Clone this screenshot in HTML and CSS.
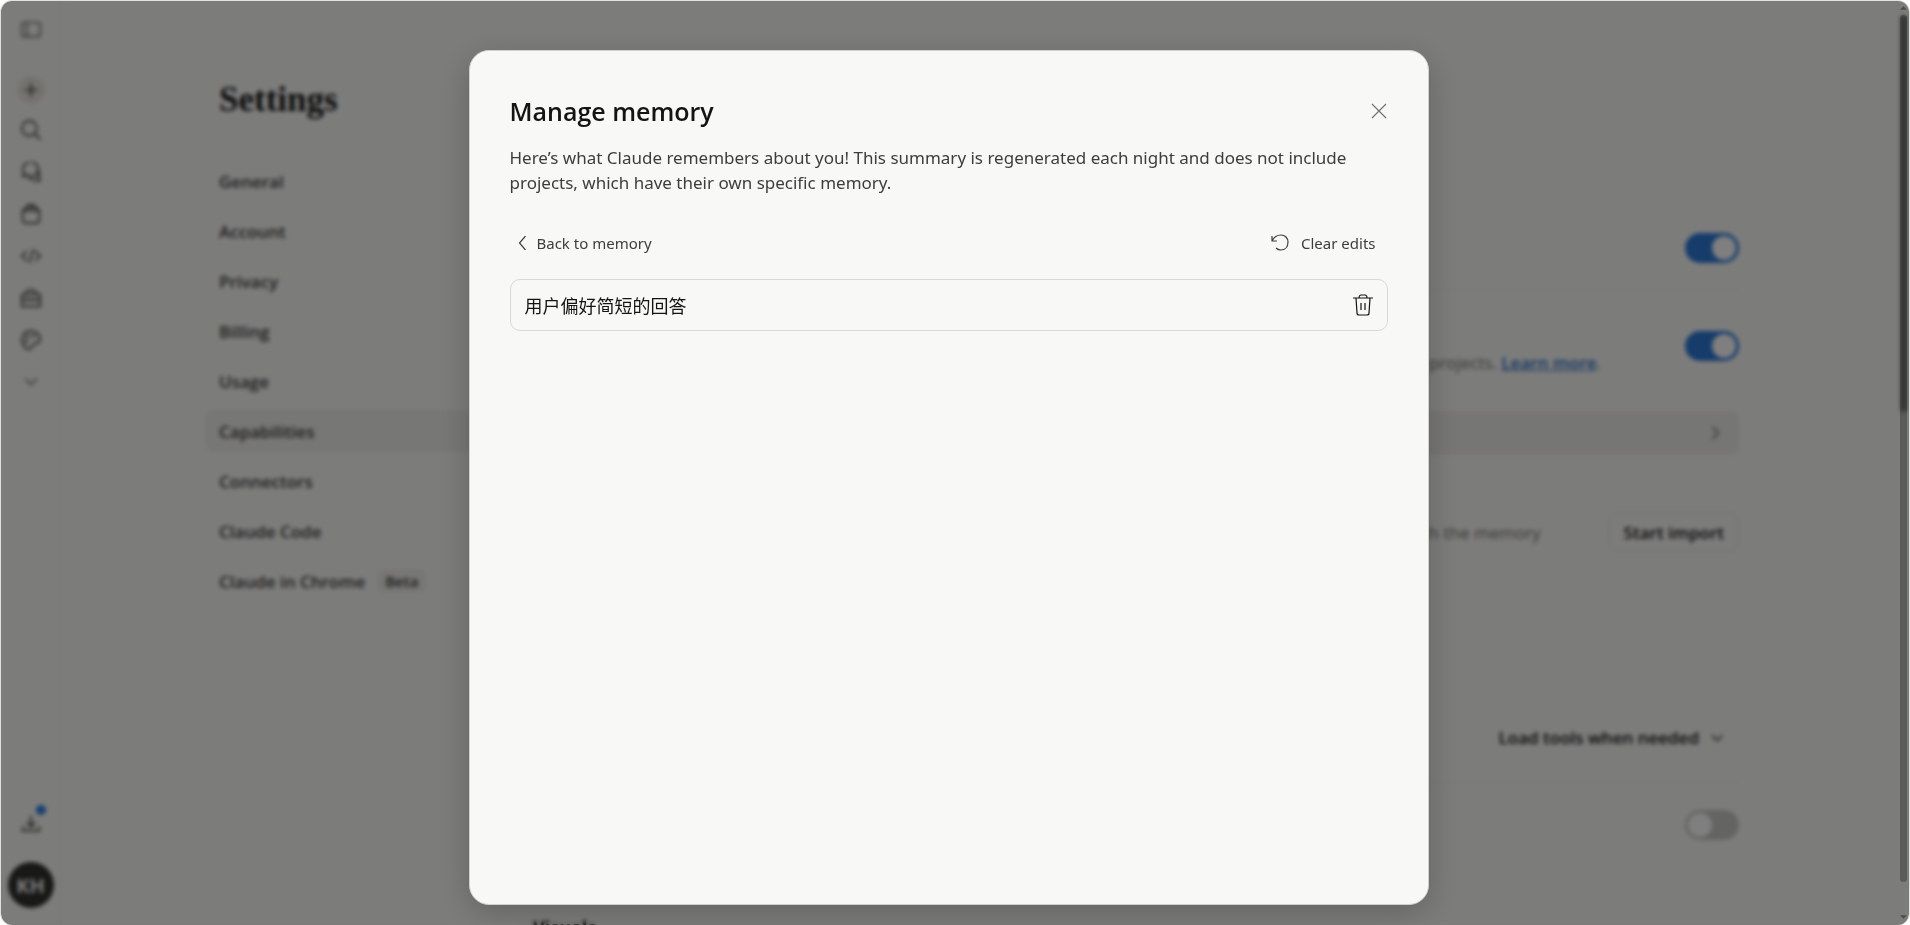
FILE: index.html
```html
<!DOCTYPE html>
<html lang="en">
<head>
    <meta charset="UTF-8">
    <meta name="viewport" content="width=device-width, initial-scale=1.0">
    <title>Settings</title>
    <link rel="stylesheet" href="styles.css">
</head>
<body>
    <div class="window">
        <div class="app">
            <aside class="sidebar">
                <button class="icon-btn toggle-btn" aria-label="Toggle sidebar">
                    <svg viewBox="0 0 24 24"><rect x="1" y="3" width="22" height="17" rx="2"/><path d="M7 3v17"/></svg>
                </button>
                <button class="icon-btn new-btn" aria-label="New chat">
                    <svg viewBox="0 0 24 24"><path d="M12 4v16M4 12h16"/></svg>
                </button>
                <button class="icon-btn" aria-label="Search">
                    <svg viewBox="0 0 24 24"><circle cx="10" cy="10" r="9"/><path d="M16 16l8 8"/></svg>
                </button>
                <button class="icon-btn" aria-label="Chats">
                    <svg viewBox="0 0 24 24"><path d="M2 17l2-3C0 8 4 0 11 0s11 5 9 12c-1 5-8 7-11 4-2 1-4 1-7 1z"/><path d="M9 18c2 4 7 5 14 4l-2-4c2-3 1-6-1-8"/></svg>
                </button>
                <button class="icon-btn" aria-label="Projects">
                    <svg viewBox="0 0 24 24"><path d="M2 8h20v10c0 3-1 5-4 5H6c-3 0-4-2-4-5zM3 7l3-3h12l3 3M7 1h10"/></svg>
                </button>
                <button class="icon-btn" aria-label="Code">
                    <svg viewBox="0 0 24 24"><path d="M7 6l-6 6 6 6M17 6l6 6-6 6M15 4l-5 16"/></svg>
                </button>
                <button class="icon-btn" aria-label="Customize">
                    <svg viewBox="0 0 24 24"><path d="M1 10c0-2 1-3 3-3h16c2 0 3 1 3 3v12H1zM1 14h22M6 7c0-7 12-7 12 0M8 12v4M16 12v4"/></svg>
                </button>
                <button class="icon-btn" aria-label="Design">
                    <svg viewBox="0 0 24 24"><path d="M12 1C5 1 1 7 1 12s4 11 9 11c3 0 3-3 4-5 2-4 9 0 9-7 0-5-5-10-11-10z"/><circle cx="8" cy="8" r="1"/><circle cx="15" cy="7" r="1"/><circle cx="6" cy="14" r="1"/></svg>
                </button>
                <button class="icon-btn faint" aria-label="More">
                    <svg viewBox="0 0 24 24"><path d="M5 8l7 7 7-7"/></svg>
                </button>
                <div class="sidebar-bottom">
                    <button class="icon-btn download" aria-label="Download apps">
                        <svg viewBox="0 0 24 24"><path d="M12 2v13M7 10l5 5 5-5M2 15v5h20v-5"/></svg>
                        <span class="dot"></span>
                    </button>
                    <button class="avatar">KH</button>
                </div>
            </aside>

            <div class="page">
                <div class="settings-side">
                    <h1>Settings</h1>
                    <nav class="settings-nav">
                        <a href="#">General</a>
                        <a href="#">Account</a>
                        <a href="#">Privacy</a>
                        <a href="#">Billing</a>
                        <a href="#">Usage</a>
                        <a href="#" class="active">Capabilities</a>
                        <a href="#">Connectors</a>
                        <a href="#">Claude Code</a>
                        <a href="#">Claude in Chrome <span class="beta">Beta</span></a>
                    </nav>
                </div>

                <main class="content">
                    <div class="row">
                        <input type="checkbox" class="switch" aria-label="Search past chats" checked>
                    </div>
                    <div class="row memory-row">
                        <p class="desc">projects. <a href="#">Learn more</a>.</p>
                        <input type="checkbox" class="switch" aria-label="Generate memory" checked>
                    </div>
                    <button class="memory-card" aria-label="View memory">
                        <svg viewBox="0 0 24 24"><path d="M9 5l7 7-7 7"/></svg>
                    </button>
                    <div class="row import-row">
                        <p class="desc">with the memory</p>
                        <button class="import-btn">Start import</button>
                    </div>
                    <div class="row tools-row">
                        <button class="tools-btn">Load tools when needed
                            <svg viewBox="0 0 24 24"><path d="M4 8l8 8 8-8"/></svg>
                        </button>
                    </div>
                    <div class="row last-row">
                        <input type="checkbox" class="switch" aria-label="Connector discovery">
                    </div>
                    <h2>Visuals</h2>
                </main>
            </div>
            <div class="scroll-thumb"></div>
        </div>

        <div class="overlay">
            <div class="modal" role="dialog" aria-labelledby="modalTitle">
                <div class="modal-header">
                    <h2 id="modalTitle">Manage memory</h2>
                    <button class="close-btn" aria-label="Close">
                        <svg viewBox="0 0 16 16"><path d="M1 1l14 14M15 1L1 15"/></svg>
                    </button>
                </div>
                <p class="modal-text">Here’s what Claude remembers about you! This summary is regenerated each night and does not include projects, which have their own specific memory.</p>
                <div class="modal-actions">
                    <button class="text-btn back-btn">
                        <svg class="back-icon" viewBox="0 0 8 14"><path d="M7 0L1 7l6 7"/></svg>
                        Back to memory
                    </button>
                    <button class="text-btn clear-btn">
                        <svg class="clear-icon" viewBox="0 0 18 18"><path d="M1 2v5h5M1 7c2-4 5-6 9-6 4 0 7 3 7 7 0 5-3 8-7 8-2 0-4-1-5-2"/></svg>
                        Clear edits
                    </button>
                </div>
                <ul class="edits">
                    <li>
                        <span lang="zh-CN">用户偏好简短的回答</span>
                        <button class="delete-btn" aria-label="Delete edit">
                            <svg viewBox="0 0 20 22"><path d="M0 4h20M6 4c0-2 1-3 2-3h4c1 0 2 1 2 3M3 4l1 15c0 1 1 2 2 2h8c1 0 2-1 2-2l1-15M8 9v7M12 9v7"/></svg>
                        </button>
                    </li>
                </ul>
            </div>
            <div class="scroll-track">
                <svg viewBox="0 0 8 4"><path d="M0 4l4-4 4 4z"/></svg>
                <span></span>
                <svg viewBox="0 0 8 4"><path d="M0 0l4 4 4-4z"/></svg>
            </div>
        </div>
    </div>
</body>
</html>
```
FILE: styles.css
```css
* {
    box-sizing: border-box;
}

body {
    margin: 0;
    background: #fff;
    color: #141413;
    font-family: "Open Sans", "Noto Sans CJK SC", sans-serif;
    font-size: 17px;
}

h1, h2, p, ul {
    margin: 0;
    padding: 0;
}

button {
    border: 0;
    padding: 0;
    background: none;
    color: inherit;
    font: inherit;
    cursor: pointer;
}

svg {
    display: block;
    fill: none;
    stroke: currentColor;
    stroke-width: 1.2;
}

.window {
    position: relative;
    height: 100vh;
    overflow: hidden;
    border: 1px solid #dfe3df;
    border-bottom: 0;
    border-radius: 12px;
}

.app {
    display: flex;
    height: 100%;
    background: #f9f9f7;
}

/* Sidebar */
.sidebar {
    display: flex;
    flex-direction: column;
    align-items: center;
    flex: none;
    width: 60px;
    padding: 13px 0 17px;
    border-right: 1px solid #e6e6e2;
}

.icon-btn {
    display: flex;
    align-items: center;
    justify-content: center;
    width: 32px;
    height: 32px;
    margin-bottom: 10px;
    color: #3d3d3a;
}

.icon-btn svg {
    width: 20px;
    height: 20px;
    stroke-width: 2;
}

.toggle-btn {
    margin-bottom: 30px;
    color: #73726c;
}

.new-btn {
    width: 28px;
    height: 28px;
    border-radius: 50%;
    background: #e8e6df;
}

.faint {
    color: #73726c;
}

.sidebar-bottom {
    display: flex;
    flex-direction: column;
    align-items: center;
    gap: 12px;
    margin-top: auto;
}

.download {
    position: relative;
}

.dot {
    position: absolute;
    top: -3px;
    right: 1px;
    width: 10px;
    height: 10px;
    border-radius: 50%;
    background: #2c7be0;
}

.avatar {
    width: 46px;
    height: 46px;
    border-radius: 50%;
    background: #30302e;
    color: #f9f9f7;
    font-size: 20px;
    font-weight: 700;
}

/* Settings page */
.page {
    display: flex;
    flex: 1;
    gap: 40px;
    padding: 77px 170px 0 144px;
    overflow: hidden;
}

.settings-side {
    flex: none;
    width: 288px;
}

.settings-side h1 {
    padding-left: 14px;
    font-family: "Liberation Serif", serif;
    font-size: 35px;
    line-height: 44px;
}

.settings-nav {
    display: flex;
    flex-direction: column;
    gap: 8px;
    margin-top: 38px;
}

.settings-nav a {
    display: flex;
    align-items: center;
    gap: 12px;
    height: 42px;
    padding-left: 14px;
    border-radius: 8px;
    color: #3d3d3a;
    font-weight: 600;
    text-decoration: none;
}

.settings-nav a.active {
    background: #efeeeb;
}

.beta {
    padding: 2px 8px;
    border-radius: 6px;
    background: #efeeeb;
    font-size: 15px;
}

.content {
    flex: 1;
    padding-top: 138px;
}

.row {
    display: flex;
    align-items: center;
    justify-content: flex-end;
    height: 74px;
    padding-bottom: 10px;
    border-bottom: 1px solid #e6e6e2;
}

.switch {
    appearance: none;
    flex: none;
    display: flex;
    width: 54px;
    height: 30px;
    margin: 0;
    padding: 3px;
    border-radius: 15px;
    background: #c8c8c4;
}

.switch::before {
    content: "";
    width: 24px;
    height: 24px;
    border-radius: 50%;
    background: #fff;
}

.switch:checked {
    justify-content: flex-end;
    background: #2c78d6;
}

.desc {
    color: #73726c;
    white-space: nowrap;
}

.desc a {
    color: #2c6fc4;
    font-weight: 600;
}

.memory-row {
    align-items: flex-start;
    height: 121px;
    padding-top: 41px;
    border-bottom: 0;
}

.memory-row .desc {
    padding: 20px 84px 0 0;
}

.memory-card {
    display: flex;
    align-items: center;
    justify-content: flex-end;
    width: 100%;
    height: 44px;
    padding-right: 14px;
    border-radius: 8px;
    background: #edece9;
    color: #73726c;
}

.memory-card svg {
    width: 20px;
    height: 20px;
    stroke-width: 2;
}

.import-row {
    height: 154px;
    padding: 0;
    border-bottom: 0;
}

.import-row .desc {
    padding-right: 68px;
}

.import-btn {
    height: 38px;
    padding: 0 14px;
    border: 1px solid #deddd8;
    border-radius: 8px;
    font-weight: 600;
}

.tools-row {
    height: 174px;
    padding: 84px 14px 0 0;
}

.tools-btn {
    display: flex;
    align-items: center;
    gap: 10px;
    font-weight: 600;
}

.tools-btn svg {
    width: 16px;
    height: 16px;
    stroke-width: 2;
}

.last-row {
    height: 84px;
    padding: 0;
    border-bottom: 0;
}

.content h2 {
    margin-top: 46px;
    font-size: 18px;
    line-height: 28px;
}

/* Modal */
.overlay {
    position: absolute;
    inset: 0;
    padding: 49px 13px 20px 0;
    background: rgba(0, 0, 0, 0.5);
    backdrop-filter: blur(2px);
}

.modal {
    max-width: 960px;
    height: 100%;
    margin: 0 auto;
    padding: 40px;
    border: 1px solid #d0d0cd;
    border-radius: 20px;
    background: #f8f8f6;
    box-shadow: 0 8px 32px rgba(0, 0, 0, 0.2);
}

.modal-header {
    display: flex;
    align-items: center;
    justify-content: space-between;
}

.modal-header h2 {
    font-size: 25px;
    font-weight: 600;
    line-height: 40px;
}

.close-btn {
    padding: 2px 1px;
    color: #73726c;
}

.close-btn svg {
    width: 16px;
    height: 16px;
}

.modal-text {
    margin-top: 14px;
    color: #3d3d3a;
    font-family: "Noto Sans", sans-serif;
    font-size: 17px;
    line-height: 25px;
}

.modal-actions {
    display: flex;
    justify-content: space-between;
    margin-top: 30px;
}

.text-btn {
    display: flex;
    align-items: center;
    height: 36px;
    color: #3d3d3a;
    font-family: "Noto Sans", sans-serif;
    font-size: 15px;
}

.back-btn {
    gap: 10px;
    padding-left: 8px;
}

.back-icon {
    width: 9px;
    height: 14px;
}

.clear-btn {
    gap: 12px;
    padding-right: 12px;
}

.clear-icon {
    width: 18px;
    height: 18px;
}

.edits {
    margin-top: 18px;
    list-style: none;
}

.edits li {
    display: flex;
    align-items: center;
    justify-content: space-between;
    height: 52px;
    padding: 0 14px;
    border: 1px solid #d8d8d5;
    border-radius: 10px;
    font-size: 18px;
    line-height: 24px;
}

.edits span {
    font-family: "Noto Sans CJK SC", sans-serif;
}

.delete-btn svg {
    width: 20px;
    height: 22px;
}

/* Scrollbars */
.scroll-thumb {
    position: absolute;
    top: 14px;
    right: 2px;
    width: 7px;
    height: 43%;
    border-radius: 4px;
    background: #91918e;
}

.scroll-track {
    position: absolute;
    top: 5px;
    right: 2px;
    bottom: 6px;
    display: flex;
    flex-direction: column;
    width: 7px;
    color: #4c4c4a;
}

.scroll-track span {
    flex: 1;
    margin: 5px 0 33px;
    border-radius: 4px;
    background: rgba(0, 0, 0, 0.27);
}

.scroll-track svg {
    height: 4px;
    fill: currentColor;
    stroke: none;
}
```
